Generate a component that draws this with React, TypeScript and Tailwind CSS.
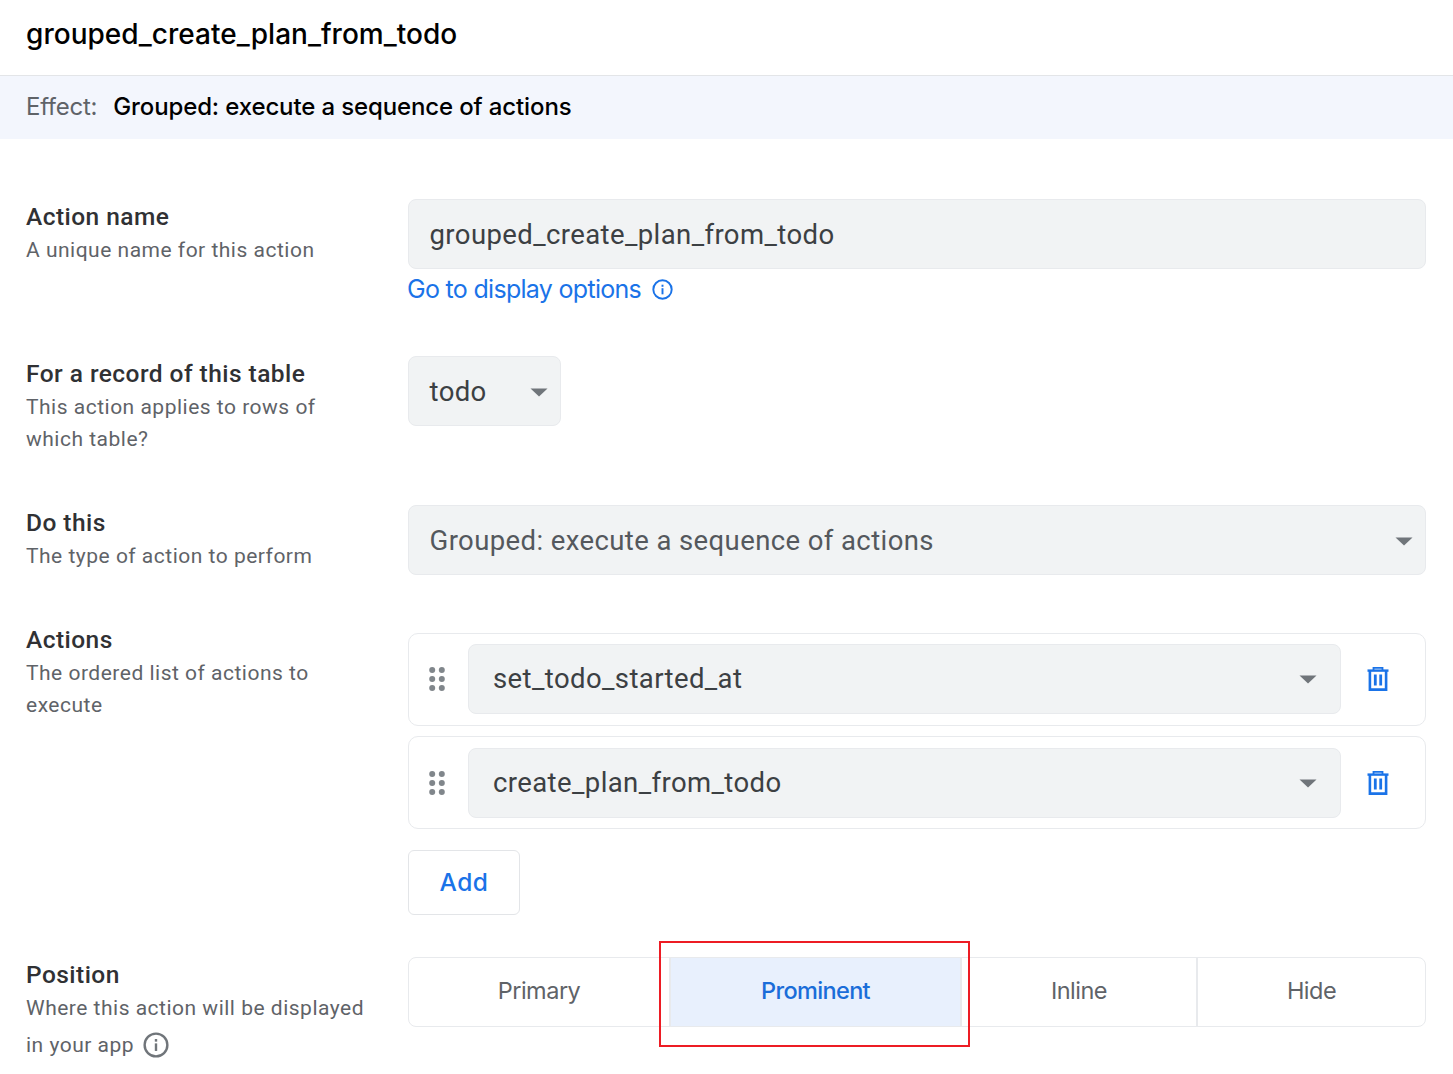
import React from "react";

const Caret = ({ className = "" }: { className?: string }) => (
  <svg width="18" height="9" viewBox="0 0 18 9" className={className}>
    <path d="M0.5 0.5H17.5L9 8.5Z" fill="#70757a" />
  </svg>
);

const Info = ({ size, color }: { size: number; color: string }) => (
  <svg width={size} height={size} viewBox="0 0 24 24" fill="none">
    <circle cx="12" cy="12" r="10.5" stroke={color} strokeWidth="2.2" />
    <rect x="10.9" y="10.5" width="2.2" height="7" fill={color} />
    <rect x="10.9" y="6.5" width="2.2" height="2.4" fill={color} />
  </svg>
);

const Grip = () => (
  <svg width="16" height="24" viewBox="0 0 16 24" fill="#80868b">
    {[3, 12, 21].map((y) => (
      <g key={y}>
        <circle cx="3.2" cy={y} r="3" />
        <circle cx="12.8" cy={y} r="3" />
      </g>
    ))}
  </svg>
);

const Trash = () => (
  <svg width="22" height="24" viewBox="0 0 22 24" fill="none">
    <path d="M0.5 3.6H21.5" stroke="#1a73e8" strokeWidth="2.4" />
    <path d="M6.5 3V0.8H15.5V3" stroke="#1a73e8" strokeWidth="1.8" />
    <path d="M2.9 4V22.6H19.1V4" stroke="#1a73e8" strokeWidth="2.6" />
    <path d="M8.3 7.5V18.5M13.7 7.5V18.5" stroke="#1a73e8" strokeWidth="2.8" />
  </svg>
);

const Label = ({ title, className = "mt-[2px]", children }: { title: string; className?: string; children: React.ReactNode }) => (
  <div className={`w-[382px] shrink-0 ${className}`}>
    <div className="text-[24.5px] leading-[32px] font-medium text-[#303134] tracking-[0.45px]">{title}</div>
    <div className="mt-[1px] text-[21px] leading-[32px] text-[#5f6368] tracking-[0.5px]">{children}</div>
  </div>
);

const ActionRow = ({ name, pad }: { name: string; pad: string }) => (
  <div className={`flex items-center h-[93px] border border-[#e8eaed] rounded-[10px] pl-[20px] pr-[36px] ${pad}`}>
    <Grip />
    <div className="ml-[23px] flex-1 h-[70px] flex items-center justify-between bg-[#f1f3f4] border border-[#e8eaed] rounded-[8px] pl-[24px] pr-[23px] text-[27.5px] text-[#3c4043] tracking-[0.4px]">
      <span>{name}</span>
      <Caret className="mt-px" />
    </div>
    <div className="ml-[26px] flex"><Trash /></div>
  </div>
);

export default function App() {
  return (
    <div className="relative w-[1453px] h-[1074px] overflow-hidden bg-white font-['Roboto',sans-serif]">
      <header className="h-[76px] border-b border-[#e3e5e8] pl-[26px] pt-[15px]">
        <h1 className="text-[28px] leading-[38px] font-medium text-black font-['Inter',sans-serif] tracking-[0.03px]">grouped_create_plan_from_todo</h1>
      </header>
      <div className="h-[63px] bg-[#f3f6fd] pl-[26px] pb-[2px] flex items-center font-['Inter',sans-serif] text-[24px] tracking-[-0.13px]">
        <span className="text-[#5f6368] tracking-[-0.25px]">Effect:</span>
        <span className="ml-[16px] text-black font-medium">Grouped: execute a sequence of actions</span>
      </div>

      <main className="pl-[26px] pr-[27px] pt-[60px]">
        <section className="flex h-[157px]">
          <Label title="Action name">A unique name for this action</Label>
          <div className="flex-1">
            <div className="h-[70px] flex items-center bg-[#f1f3f4] border border-[#e8eaed] rounded-[8px] pl-[20.5px] pt-[2px] text-[27.5px] text-[#3c4043] tracking-[0.4px]">grouped_create_plan_from_todo</div>
            <div className="mt-[2px] -ml-px flex items-center gap-[11px] text-[25px] leading-[36px] text-[#1a73e8] font-['Inter',sans-serif] tracking-[-0.7px]">
              <span>Go to display options</span>
              <Info size={21} color="#1a73e8" />
            </div>
          </div>
        </section>

        <section className="flex h-[149px]">
          <Label title="For a record of this table">This action applies to rows of<br />which table?</Label>
          <div className="w-[153px] h-[70px] flex items-center justify-between bg-[#f1f3f4] border border-[#e8eaed] rounded-[8px] pl-[20.5px] pr-[12px] pt-[2px] text-[27.5px] text-[#3c4043] tracking-[0.4px]">
            <span>todo</span>
            <Caret />
          </div>
        </section>

        <section className="flex h-[128px]">
          <Label title="Do this">The type of action to perform</Label>
          <div className="flex-1 h-[70px] flex items-center justify-between bg-[#f1f3f4] border border-[#e8eaed] rounded-[8px] pl-[20.5px] pr-[12px] pt-[2px] text-[27.5px] text-[#54585d] tracking-[0.4px]">
            <span>Grouped: execute a sequence of actions</span>
            <Caret />
          </div>
        </section>

        <section className="flex h-[324px]">
          <Label title="Actions" className="-mt-[9px]">The ordered list of actions to<br />execute</Label>
          <div className="flex-1 flex flex-col items-stretch gap-[10px]">
            <ActionRow name="set_todo_started_at" pad="pb-px" />
            <ActionRow name="create_plan_from_todo" pad="pt-px" />
            <button className="mt-[11px] w-[112px] h-[65px] border border-[#e3e5e8] rounded-[6px] text-[24.5px] font-medium text-[#1a73e8] font-['Inter',sans-serif] tracking-[0.5px]">Add</button>
          </div>
        </section>

        <section className="flex">
          <Label title="Position">
            Where this action will be displayed<br />
            <span className="inline-flex items-center gap-[9px] mt-[5px]">in your app <Info size={26} color="#70757a" /></span>
          </Label>
          <div className="flex-1 h-[70px] flex border border-[#e8eaed] rounded-[8px] text-[23.5px] text-[#5f6368] font-['Inter',sans-serif] tracking-[-0.5px]">
            <div className="w-[260px] flex items-center justify-center pb-[2px]">Primary</div>
            <div className="w-[293px] flex items-center justify-center bg-[#e8f0fd] border-x-2 border-[#e8eaed] text-[#1a6dd9] font-[450] tracking-[-0.65px] pb-[2px]">Prominent</div>
            <div className="w-[236px] flex items-center justify-center border-r-2 border-[#e8eaed] pb-[2px]">Inline</div>
            <div className="flex-1 flex items-center justify-center pb-[2px]">Hide</div>
          </div>
        </section>
      </main>

      <div className="absolute left-[659px] top-[941px] w-[311px] h-[106px] border-2 border-[#ed1c24]" />
    </div>
  );
}
